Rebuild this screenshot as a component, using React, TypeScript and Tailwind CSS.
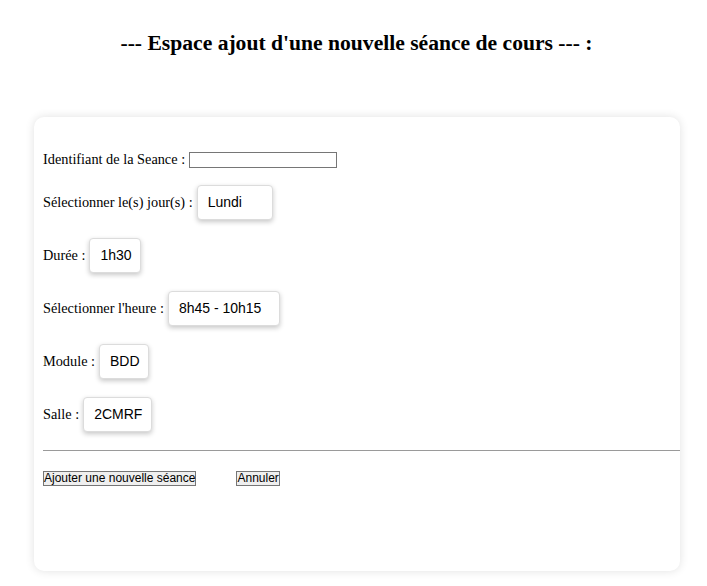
import React from "react";

const Box = ({ children, w }: { children: React.ReactNode; w: string }) => (
  <div
    className={`inline-flex items-center h-[35px] pl-[10px] border border-[#dcdcdc] rounded-[4px] bg-white shadow-[0_2px_5px_rgba(0,0,0,0.22)] text-[14px] text-black ${w}`}
    style={{ fontFamily: '"Liberation Sans", Arial, sans-serif' }}
  >
    {children}
  </div>
);

const Row = ({ label, children }: { label: string; children: React.ReactNode }) => (
  <div className="flex items-center h-[35px] mt-[18px]">
    <span className="mr-[4px]">{label}</span>
    {children}
  </div>
);

export default function App() {
  return (
    <div
      className="min-h-[586px] w-[707px] bg-white text-black"
      style={{ fontFamily: '"Liberation Serif", "Times New Roman", serif' }}
    >
      <h2 className="pt-[29px] pl-[6px] text-center text-[21.6px] font-bold leading-[28px]">
        --- Espace ajout d'une nouvelle séance de cours --- :
      </h2>
      <div className="ml-[34px] mt-[60px] w-[646px] h-[454px] rounded-[10px] bg-white shadow-[0_0_10px_rgba(0,0,0,0.12)] pl-[9px] pt-[25px] text-[14.3px]">
        <div className="flex items-center h-[35px]">
          <span className="mr-[4px]">Identifiant de la Seance :</span>
          <input
            type="text"
            className="w-[148px] h-[16px] border border-[#767676] bg-white outline-none"
          />
        </div>
        <div className="flex items-center h-[35px] mt-[8px]">
          <span className="mr-[4px]">Sélectionner le(s) jour(s) :</span>
          <Box w="w-[76px]">Lundi</Box>
        </div>
        <Row label="Durée :">
          <Box w="w-[52px]">1h30</Box>
        </Row>
        <Row label="Sélectionner l'heure :">
          <Box w="w-[112px]">8h45 - 10h15</Box>
        </Row>
        <Row label="Module :">
          <Box w="w-[50px]">BDD</Box>
        </Row>
        <Row label="Salle :">
          <Box w="w-[69px]">2CMRF</Box>
        </Row>
        <div className="mt-[18px] h-0 border-t border-[#9a9a9a]" />
        <div
          className="flex items-center gap-[40px] mt-[20px] text-[12px]"
          style={{ fontFamily: '"Liberation Sans", Arial, sans-serif' }}
        >
          <button className="h-[15px] px-0 leading-[13px] border border-[#767676] bg-[#efefef]">
            Ajouter une nouvelle séance
          </button>
          <button className="h-[15px] px-0 leading-[13px] border border-[#767676] bg-[#efefef]">
            Annuler
          </button>
        </div>
      </div>
    </div>
  );
}
